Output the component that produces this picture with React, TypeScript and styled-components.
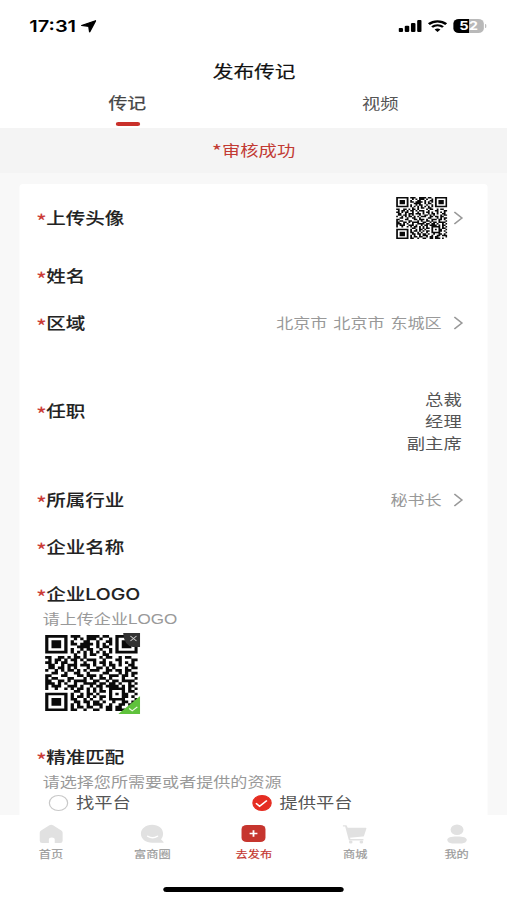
import React from "react";
import styled, { createGlobalStyle } from "styled-components";

const Global = createGlobalStyle`
  * { box-sizing: border-box; }
  html, body { margin: 0; padding: 0; background: #fff; overflow: hidden; }
  body { width: 507px; height: 900px; }
`;

/* The app is laid out on a 416px wide canvas and stretched to the window width. */
const Screen = styled.div`
  width: 416px;
  height: 900px;
  transform: scaleX(1.21875);
  transform-origin: 0 0;
  display: flex;
  flex-direction: column;
  overflow: hidden;
  background: #fff;
  color: #222;
  font-family: "Liberation Sans", "Noto Sans CJK SC", sans-serif;
`;

const StatusBar = styled.div`
  height: 52px;
  flex: none;
  display: flex;
  align-items: center;
  justify-content: space-between;
  padding: 0 17px 0 24px;
`;

const Clock = styled.div`
  display: flex;
  align-items: center;
  gap: 4px;
  color: #000;
  font: 600 16.4px/20px Inter, sans-serif;
`;

const StatusIcons = styled.div`
  display: flex;
  align-items: center;
  gap: 5px;
`;

const Title = styled.h1`
  margin: 0;
  height: 38px;
  flex: none;
  padding-left: 1px;
  font-size: 17px;
  line-height: 41px;
  font-weight: 400;
  color: #111;
  text-align: center;
  -webkit-text-stroke: 0.2px #111;
`;

const Tabs = styled.nav`
  height: 38px;
  flex: none;
  display: grid;
  grid-template-columns: 1fr 1fr;
`;

const Tab = styled.div<{ $active?: boolean }>`
  display: flex;
  flex-direction: column;
  align-items: center;
  padding-left: ${(p) => (p.$active ? 1 : 0)}px;
  font-size: ${(p) => (p.$active ? 15.5 : 15)}px;
  line-height: 28px;
  color: ${(p) => (p.$active ? "#444" : "#555")};
  -webkit-text-stroke: ${(p) => (p.$active ? "0.25px #444" : "0")};

  &::after {
    content: "";
    width: 20px;
    height: 4px;
    margin-top: 4px;
    border-radius: 2px;
    background: ${(p) => (p.$active ? "#c9302a" : "transparent")};
  }
`;

const Notice = styled.div`
  height: 45px;
  flex: none;
  background: #f4f4f4;
  color: #c23a33;
  font: 400 15px/44px "Noto Sans CJK SC", sans-serif;
  text-align: center;
`;

const NoticeStar = styled.span`
  font-size: 18px;
  line-height: 1;
  vertical-align: -2px;
`;

const Body = styled.main`
  height: 642px;
  flex: none;
  padding: 11px 16px 0 16.4px;
  background: #f8f8f8;
  overflow: hidden;
`;

const Card = styled.section`
  height: 631px;
  padding: 0 20px 0 13.6px;
  border-radius: 3px 3px 0 0;
  background: #fff;
`;

const Row = styled.div<{ $h: number }>`
  height: ${(p) => p.$h}px;
  display: flex;
  align-items: center;
  justify-content: space-between;
`;

const LabelText = styled.div`
  display: flex;
  font: 500 16px/28px Inter, "Noto Sans CJK SC", sans-serif;
  height: 28px;
  color: #222;
  -webkit-text-stroke: 0.1px currentColor;
`;

const Star = styled.span`
  width: 8.4px;
  margin-left: -0.4px;
  font: 400 19px/34px "Noto Sans CJK SC", sans-serif;
  color: #cb3a34;
`;

const Value = styled.div<{ $gap?: number }>`
  display: flex;
  align-items: center;
  gap: ${(p) => p.$gap ?? 9.6}px;
  font-size: 14px;
  line-height: 22px;
  color: #999;
  word-spacing: 1px;
  white-space: pre;
`;

const Jobs = styled.div`
  padding-top: 22px;
  margin-right: 1.2px;
  font-size: 15px;
  line-height: 22px;
  color: #555;
  text-align: right;
`;

const Block = styled.div<{ $top: number }>`
  padding-top: ${(p) => p.$top}px;
`;

const Hint = styled.div`
  padding-left: 5px;
  font-size: 14px;
  line-height: 22px;
  color: #999;
`;

const Upload = styled.div`
  position: relative;
  width: 80.5px;
  height: 82px;
  margin: 2px 0 0 5px;
  padding: 3px 0 0 2px;
`;

const RemoveBadge = styled.div`
  position: absolute;
  top: 1px;
  right: 0;
  display: flex;
`;

const DoneBadge = styled.div`
  position: absolute;
  right: 0;
  bottom: 0;
  display: flex;
`;

const Options = styled.div`
  display: grid;
  grid-template-columns: 167px 1fr;
  padding-left: 9.6px;
`;

const Option = styled.div`
  display: flex;
  align-items: center;
  gap: 6.2px;
  height: 20px;
  font-size: 15px;
  line-height: 20px;
  color: #555;
`;

const Radio = styled.span<{ $on?: boolean }>`
  width: 16.5px;
  height: 16.5px;
  display: flex;
  align-items: center;
  justify-content: center;
  border-radius: 50%;
  border: 1px solid ${(p) => (p.$on ? "#e52d22" : "#c8c8c8")};
  background: ${(p) => (p.$on ? "#e52d22" : "#fff")};
`;

const TabBar = styled.footer`
  height: 60px;
  flex: none;
  display: grid;
  grid-template-columns: repeat(5, 1fr);
  background: #fff;
`;

const NavItem = styled.div<{ $active?: boolean }>`
  display: flex;
  flex-direction: column;
  align-items: center;
  padding: 9px 0 0 0.5px;
  font-size: 10px;
  line-height: 14px;
  color: ${(p) => (p.$active ? "#c4352e" : "#999")};
  -webkit-text-stroke: 0.15px currentColor;

  svg { margin-bottom: 3.5px; }
`;

const HomeIndicator = styled.div`
  width: 148px;
  height: 5px;
  margin: 12px auto 0;
  border-radius: 3px;
  background: #000;
`;

const QR_ROWS = [
  "#######.###..####.##..#######",
  "#.....#..#.#.###.#..#.#.....#",
  "#.###.#.#...##..#..##.#.###.#",
  "#.###.#.##.####.#.#.#.#.###.#",
  "#.###.#...####..#.##..#.###.#",
  "#.....#.#..#.##..#..#.#.....#",
  "#######.#.#.#.#.#.#.#.#######",
  ".........#..#.##..##.........",
  "##..##.#.##.#....#.##..#.##..",
  ".#.##.#.##.#.###..#...##...##",
  "##.#.##..#..#..#.##.#..#.#.#.",
  ".##..#.###.###.#..#.##.#..##.",
  ".##.##.#.#...#..##.#.#...#.##",
  "#..#.#.##.#.#.###..##.##.##..",
  "..##..#..##..#....##...#.#.##",
  "##...##...##.###.#..###.##.#.",
  "#.##...##...#.#..##.#...#...#",
  "##..##.#.####..##..#.##.####.",
  "###.#.#..#..####.##.##.#..#.#",
  "#.###..###.#..#.##.####.#.##.",
  "#..#..#.#.##.#.#.#..#####.#.#",
  ".........##..#.#.##.#...#.##.",
  "#######.#..#.##.#...#.#.##..#",
  "#.....#.#.##.#.#.##.#...##.#.",
  "#.###.#.##..#.#..#..#####...#",
  "#.###.#..##.##.##.#..#..##.#.",
  "#.###.#.#.#..#.###..#..##.###",
  "#.....#.#.##.##..#.##.##....#",
  "#######.##..#..##..##.###.#..",
];

const QR_PATH = QR_ROWS.map((row, y) =>
  [...row].map((c, x) => (c === "#" ? `M${x} ${y}h1.03v1.03h-1.03z` : "")).join("")
).join("");

const QrCode = ({ w, h }: { w: number; h: number }) => (
  <svg width={w} height={h} viewBox="0 0 29 29" preserveAspectRatio="none" display="block">
    <path d={QR_PATH} fill="#0a0a0a" />
  </svg>
);

const Chevron = () => (
  <svg width="8" height="14" viewBox="0 0 8 14" fill="none">
    <path d="M.8 1 7 7 .8 13" stroke="#999" strokeWidth="1.4" />
  </svg>
);

const Label = ({ children }: { children: React.ReactNode }) => (
  <LabelText>
    <Star>*</Star>
    {children}
  </LabelText>
);

const Location = () => (
  <svg width="13" height="13" viewBox="0 0 13 13">
    <path
      d="M12.4.7 7.6 11.8 6.9 6.3 1 5.5z"
      fill="#000"
      stroke="#000"
      strokeWidth="1.2"
      strokeLinejoin="round"
    />
  </svg>
);

const Signal = () => (
  <svg width="19" height="12" viewBox="0 0 19 12">
    <rect x="0" y="8" width="3.7" height="4" rx="1" />
    <rect x="5.1" y="5.7" width="3.7" height="6.3" rx="1" />
    <rect x="10.2" y="3" width="3.7" height="9" rx="1" />
    <rect x="15.3" y="0" width="3.7" height="12" rx="1" />
  </svg>
);

const Wifi = () => (
  <svg width="16" height="12" viewBox="0 0 16 12" fill="none" stroke="#000">
    <path d="M.9 4.2a10.2 10.2 0 0 1 14.2 0" strokeWidth="2.3" />
    <path d="M3.5 7.1a6.5 6.5 0 0 1 9 0" strokeWidth="2.1" />
    <path d="M8 12 5.6 9.4q2.4-1.9 4.8 0z" fill="#000" stroke="none" />
  </svg>
);

const BatteryBox = styled.div`
  width: 25px;
  height: 14px;
  border-radius: 4.5px;
  background: linear-gradient(90deg, #000 52%, #b9b9b9 52%);
  color: #fff;
  font: 700 12px/14px Inter, sans-serif;
  text-align: center;
`;

const BatteryWrap = styled.div`
  display: flex;
  align-items: center;
  gap: 0.5px;

  &::after {
    content: "";
    width: 1.5px;
    height: 4px;
    border-radius: 0 2px 2px 0;
    background: #b9b9b9;
  }
`;

const HomeIcon = () => (
  <svg width="20" height="20" viewBox="0 0 20 20">
    <path
      d="M8.5 1.2q1.5-1 3 0l6.8 5.3q1.1.9 1.1 2.2v8.1q0 2.2-2 2.2h-4.5v-3.4q0-2.2-2.4-2.2t-2.4 2.2V19H2.6q-2 0-2-2.2V8.7q0-1.3 1.1-2.2z"
      fill="#e1e1e1"
    />
  </svg>
);

const ChatIcon = () => (
  <svg width="20" height="20" viewBox="0 0 20 20">
    <path
      d="M9.8.8c5.3 0 9 3.9 9 8.8 0 2.8-.8 4.4-1.7 5.7l2.1 2.6q.4.9-.7.9H9.8C4.5 18.8.6 14.8.6 9.8S4.5.8 9.8.8z"
      fill="#e1e1e1"
    />
    <path d="M6.2 12.2q4 3.2 8 0" fill="none" stroke="#fff" strokeWidth="1.4" strokeLinecap="round" />
  </svg>
);

const PlusIcon = () => (
  <svg width="20" height="20" viewBox="0 0 20 20">
    <rect x="0" y="1" width="20" height="17" rx="4.5" fill="#c6352e" />
    <path d="M10 6.3v6.4M6.8 9.5h6.4" stroke="#fff" strokeWidth="1.5" />
  </svg>
);

const CartIcon = () => (
  <svg width="20" height="20" viewBox="0 0 20 20">
    <path
      d="M.3 1.2h3l1 2.5h14.8q.8 0 .6.9l-2 7.1q-.2.8-1 .9L6.1 13.8l.5 1.1h10.6v1.5H5.3L2.2 2.6H.3z"
      fill="#e1e1e1"
    />
    <circle cx="6.8" cy="18.1" r="1.5" fill="#e1e1e1" />
    <circle cx="15.5" cy="18.1" r="1.5" fill="#e1e1e1" />
  </svg>
);

const UserIcon = () => (
  <svg width="20" height="20" viewBox="0 0 20 20">
    <ellipse cx="10" cy="5.8" rx="5.3" ry="5.3" fill="#e1e1e1" />
    <path d="M2 15.8c0-2.2 3-3.4 8-3.4s8 1.2 8 3.4-2 3.6-4 3.6H6c-2 0-4-1.4-4-3.6z" fill="#e1e1e1" />
  </svg>
);

const NAV = [
  { name: "首页", Icon: HomeIcon },
  { name: "富商圈", Icon: ChatIcon },
  { name: "去发布", Icon: PlusIcon, active: true },
  { name: "商城", Icon: CartIcon },
  { name: "我的", Icon: UserIcon },
];

export default function App() {
  return (
    <>
      <Global />
      <Screen>
        <StatusBar>
          <Clock>
            17:31
            <Location />
          </Clock>
          <StatusIcons>
            <Signal />
            <Wifi />
            <BatteryWrap>
              <BatteryBox>52</BatteryBox>
            </BatteryWrap>
          </StatusIcons>
        </StatusBar>
        <Title>发布传记</Title>
        <Tabs>
          <Tab $active>传记</Tab>
          <Tab>视频</Tab>
        </Tabs>
        <Notice>
          <NoticeStar>*</NoticeStar>审核成功
        </Notice>
        <Body>
          <Card>
            <Row $h={68}>
              <Label>上传头像</Label>
              <Value $gap={5.5}>
                <QrCode w={42} h={42} />
                <Chevron />
              </Value>
            </Row>
            <Row $h={47}>
              <Label>姓名</Label>
            </Row>
            <Row $h={47}>
              <Label>区域</Label>
              <Value>
                北京市 北京市 东城区
                <Chevron />
              </Value>
            </Row>
            <Row $h={130}>
              <Label>任职</Label>
              <Jobs>
                <div>总裁</div>
                <div>经理</div>
                <div>副主席</div>
              </Jobs>
            </Row>
            <Row $h={48}>
              <Label>所属行业</Label>
              <Value>
                秘书长
                <Chevron />
              </Value>
            </Row>
            <Row $h={46}>
              <Label>企业名称</Label>
            </Row>
            <Block $top={10}>
              <Label>企业LOGO</Label>
              <Hint>请上传企业LOGO</Hint>
              <Upload>
                <QrCode w={76} h={76} />
                <RemoveBadge>
                  <svg width="14" height="14" viewBox="0 0 14 14">
                    <path d="M0 0h14v14H8Q1 13 0 0z" fill="#333" />
                    <path d="M6 3l5 5M11 3 6 8" stroke="#ccc" strokeWidth=".9" />
                  </svg>
                </RemoveBadge>
                <DoneBadge>
                  <svg width="18" height="18" viewBox="0 0 18 18">
                    <path d="M18 0v18H0z" fill="#5fc23c" />
                    <path d="M9 12.5l2.5 2.3 4.2-4" fill="none" stroke="#e8f8e0" strokeWidth="1.1" />
                  </svg>
                </DoneBadge>
              </Upload>
            </Block>
            <Block $top={29}>
              <Label>精准匹配</Label>
              <Hint>请选择您所需要或者提供的资源</Hint>
              <Options>
                <Option>
                  <Radio />
                  找平台
                </Option>
                <Option>
                  <Radio $on>
                    <svg width="11" height="9" viewBox="0 0 11 9" fill="none">
                      <path d="M1 4.3 4 7.3 10 1.5" stroke="#fff" strokeWidth="1.4" />
                    </svg>
                  </Radio>
                  提供平台
                </Option>
              </Options>
            </Block>
          </Card>
        </Body>
        <TabBar>
          {NAV.map(({ name, Icon, active }) => (
            <NavItem key={name} $active={active}>
              <Icon />
              {name}
            </NavItem>
          ))}
        </TabBar>
        <HomeIndicator />
      </Screen>
    </>
  );
}
